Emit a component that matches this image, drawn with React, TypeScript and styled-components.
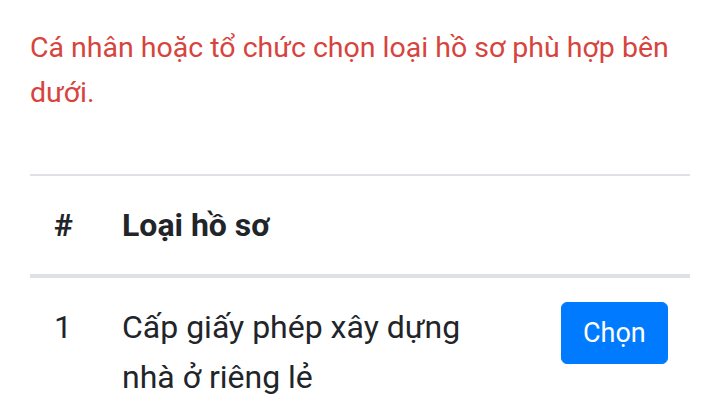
import React from "react"
import styled, { createGlobalStyle } from "styled-components"

const GlobalStyle = createGlobalStyle`
  html, body {
    margin: 0;
    padding: 0;
    background: #fff;
  }
  body {
    font-family: Roboto, "Noto Sans", "Liberation Sans", sans-serif;
    font-size: 32px;
    color: #212529;
  }
`

const Page = styled.div`
  padding: 25px 30px 0;
`

const Notice = styled.p`
  margin: 0 0 59px;
  color: #d6443d;
  font-size: 28.5px;
  line-height: 45px;
`

const Table = styled.table`
  width: 100%;
  border-collapse: collapse;
  table-layout: fixed;
`

const HeadCell = styled.th<{ $w?: number }>`
  text-align: left;
  font-weight: 700;
  line-height: 50px;
  padding: 24px;
  border-top: 2px solid #dee2e6;
  border-bottom: 4px solid #dee2e6;
  width: ${(p) => (p.$w ? `${p.$w}px` : "auto")};
  box-sizing: border-box;
`

const Cell = styled.td<{ $align?: string }>`
  vertical-align: top;
  line-height: 50px;
  padding: 24px;
  text-align: ${(p) => p.$align || "left"};
`

const Name = styled.span`
  display: inline-block;
  max-width: 380px;
`

const Button = styled.button`
  font-family: inherit;
  font-size: 27px;
  line-height: 45px;
  color: #fff;
  background: #007bff;
  border: 1px solid #007bff;
  border-radius: 6px;
  padding: 7.5px 21px;
  cursor: pointer;
`

type Row = { id: number; name: string }

const rows: Row[] = [{ id: 1, name: "Cấp giấy phép xây dựng nhà ở riêng lẻ" }]

export default function App() {
  return (
    <>
      <GlobalStyle />
      <Page>
        <Notice>Cá nhân hoặc tổ chức chọn loại hồ sơ phù hợp bên dưới.</Notice>
        <Table>
          <thead>
            <tr>
              <HeadCell $w={68}>#</HeadCell>
              <HeadCell>Loại hồ sơ</HeadCell>
              <HeadCell $w={153}></HeadCell>
            </tr>
          </thead>
          <tbody>
            {rows.map((r) => (
              <tr key={r.id}>
                <Cell>{r.id}</Cell>
                <Cell>
                  <Name>{r.name}</Name>
                </Cell>
                <Cell $align="right">
                  <Button>Chọn</Button>
                </Cell>
              </tr>
            ))}
          </tbody>
        </Table>
      </Page>
    </>
  )
}
